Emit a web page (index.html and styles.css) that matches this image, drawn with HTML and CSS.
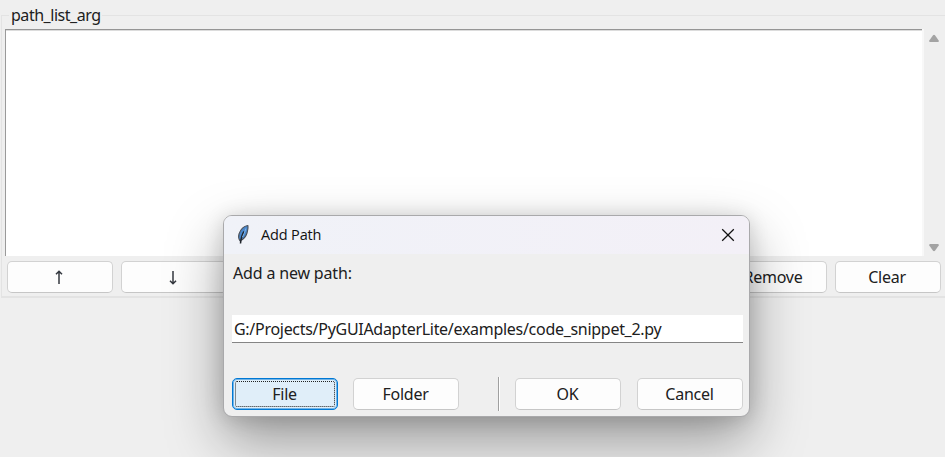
FILE: index.html
```html
<!DOCTYPE html>
<html lang="en">
<head>
<meta charset="utf-8">
<title>Add Path</title>
<link rel="stylesheet" href="styles.css">
</head>
<body>
<main class="app">
  <section class="group">
    <h1 class="group-label">path_list_arg</h1>
    <div class="list-row">
      <div class="list"></div>
      <div class="scrollbar">
        <svg width="12" height="9" viewBox="0 0 12 9"><path d="M5 1.2Q6 .3 7 1.2L10.7 6.5Q11.2 8 10 8H2Q.8 8 1.3 6.5Z" fill="#a3a3a3"/></svg>
        <svg width="12" height="9" viewBox="0 0 12 9"><path d="M5 7.8Q6 8.7 7 7.8L10.7 2.5Q11.2 1 10 1H2Q.8 1 1.3 2.5Z" fill="#a3a3a3"/></svg>
      </div>
    </div>
    <div class="toolbar">
      <button class="btn"><svg width="8" height="15" viewBox="0 0 8 15"><path d="M4 14V1.500M1 4.300L4 1.300L7 4.300" fill="none" stroke="#34383f" stroke-width="1.500"/></svg></button>
      <button class="btn"><svg width="8" height="15" viewBox="0 0 8 15"><path d="M4 1V13.500M1 10.700L4 13.700L7 10.700" fill="none" stroke="#34383f" stroke-width="1.500"/></svg></button>
      <span class="spacer"></span>
      <button class="btn">Remove</button>
      <button class="btn">Clear</button>
    </div>
  </section>
</main>
<div class="dialog" role="dialog">
  <header class="titlebar">
    <svg class="feather" width="16" height="22" viewBox="0 0 16 22">
      <path d="M12.8 1.5C9 2 5.5 5.500 4 10C3.300 12.500 3.600 15 5 16.800C8 15.500 11 12.500 12 9C12.800 6 13.500 3.500 12.800 1.500Z" fill="#4a86ca" stroke="#4b5058" stroke-width="1.100"/>
      <path d="M9 7.500C7 10.500 6 14 5.500 19.500" fill="none" stroke="#20252c" stroke-width="1.500"/>
      <path d="M10.900 4.500C10 8 8.500 11 7.500 13" fill="none" stroke="#82b5e8" stroke-width="1"/>
    </svg>
    <span class="title">Add Path</span>
    <svg class="close" width="14" height="14" viewBox="0 0 14 14"><path d="M1.200 1.200L12.800 12.800M12.800 1.200L1.200 12.800" stroke="#111" stroke-width="1.250"/></svg>
  </header>
  <div class="content">
    <div class="prompt">Add a new path:</div>
    <div class="entry">G:/Projects/PyGUIAdapterLite/examples/code_snippet_2.py</div>
    <div class="actions">
      <button class="btn focused">File</button>
      <button class="btn">Folder</button>
      <span class="separator"></span>
      <button class="btn">OK</button>
      <button class="btn">Cancel</button>
    </div>
  </div>
</div>
</body>
</html>
```
FILE: styles.css
```css
* { box-sizing: border-box; }
body {
  margin: 0;
  height: 457px;
  overflow: hidden;
  background: #efefef;
  color: #202020;
  font: 16px/20px "Noto Sans", "Open Sans", sans-serif;
}
svg { display: block; flex: none; }
.app { padding: 15px 0 0 1px; width: 947px; }
.group { border: 2px solid #e3e3e3; border-width: 1px 2px 2px 1px; height: 283px; }
.group-label {
  width: 93px;
  height: 20px;
  margin: -11px 0 0 7px;
  padding-left: 2px;
  background: #efefef;
  font-size: 16px;
  font-weight: 400;
  line-height: 20px;
  letter-spacing: -.47px;
  white-space: nowrap;
}
.list-row { display: flex; margin: 4px 0 0 3px; }
.list {
  width: 917px;
  height: 227px;
  background: #fff;
  border-top: 1px solid #959595;
  border-left: 1px solid #9a9a9a;
  box-shadow: inset 0 1px 0 #dcdcdc;
}
.scrollbar {
  width: 23px;
  height: 227px;
  border-left: 2px solid #f8f8f8;
  display: flex;
  flex-direction: column;
  align-items: center;
  justify-content: space-between;
  padding: 5px 1px 4px 0;
}
.toolbar { display: flex; gap: 8px; width: 934px; margin: 5px 0 0 5px; }
.spacer { flex: 1; }
.btn {
  display: flex;
  align-items: center;
  justify-content: center;
  flex: none;
  width: 106px;
  height: 32px;
  padding: 0 2px 0 0;
  border: 1px solid #d2d2d2;
  border-bottom-color: #c6c6c6;
  border-radius: 5px;
  background: #fdfdfd;
  color: #202020;
  font: inherit;
  letter-spacing: -.25px;
}
.dialog {
  position: absolute;
  left: 223px;
  top: 215px;
  width: 527px;
  height: 202px;
  border: 1px solid #a9a9ab;
  border-radius: 9px;
  background: #efefef;
  overflow: hidden;
  box-shadow: 0 24px 56px rgba(0, 0, 0, .36), 0 2px 20px rgba(0, 0, 0, .14);
}
.titlebar {
  display: flex;
  align-items: center;
  height: 38px;
  padding: 0 14px 0 11px;
  background: linear-gradient(90deg, #f0f2f8, #f3f0f7);
  color: #111;
  font: 14.500px/20px "Open Sans", "Noto Sans", sans-serif;
  letter-spacing: -.15px;
}
.feather { margin-right: 10px; }
.close { margin-left: auto; }
.content { padding: 9px 6px 0 8px; }
.prompt { height: 20px; padding-left: 1px; letter-spacing: -.17px; }
.entry {
  height: 28px;
  margin-top: 32px;
  padding: 4px 0 0 2px;
  border-bottom: 1px solid #858585;
  background: #fff;
  letter-spacing: -.29px;
  white-space: nowrap;
}
.actions { display: flex; align-items: center; height: 34px; margin-top: 34px; }
.actions .btn { padding-right: 1px; }
.actions .btn + .btn { margin-left: 15px; }
.separator { width: 2px; height: 34px; margin: 0 15px 0 39px; border-left: 1px solid #a0a0a0; background: #fff; }
.separator + .btn + .btn { margin-left: 16px; }
.btn.focused {
  border: 1px solid #0078d4;
  background: #e0eef9;
  box-shadow: inset 0 0 0 1px #72b4e7;
  outline: 1px dotted #222;
  outline-offset: -4px;
}
```
